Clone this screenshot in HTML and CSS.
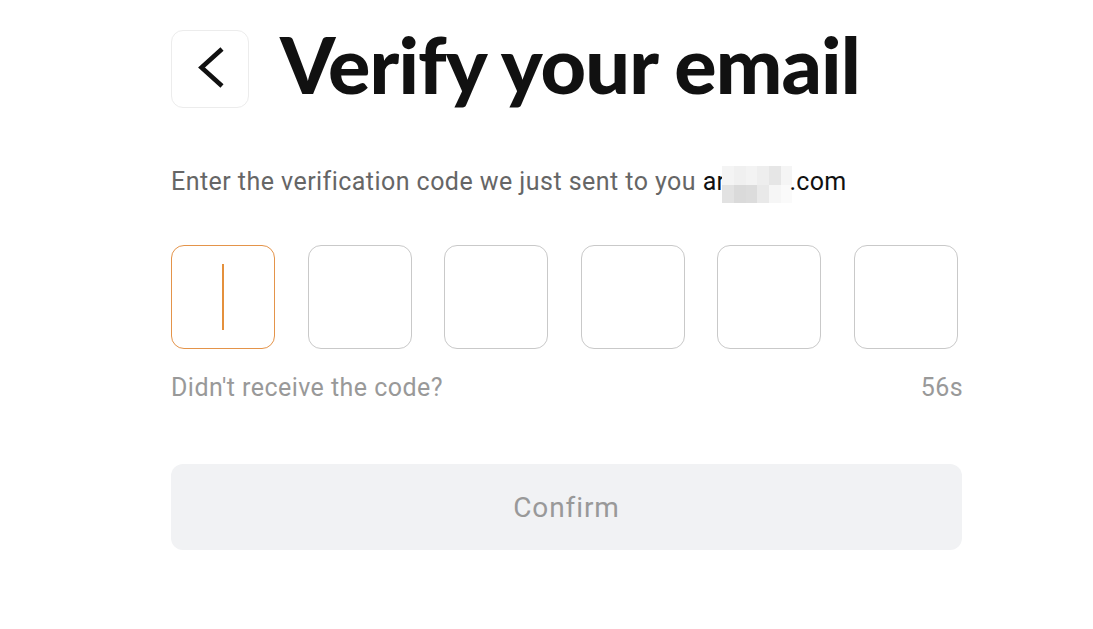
FILE: index.html
```html
<!DOCTYPE html>
<html lang="en">
<head>
<meta charset="utf-8">
<title>Verify your email</title>
<link rel="stylesheet" href="styles.css">
</head>
<body>
<main class="page">
  <header class="head">
    <button class="back" aria-label="Back">
      <svg width="78" height="78" viewBox="0 0 78 78"><path d="M51 19 L30.5 37.5 L51 56" fill="none" stroke="#111" stroke-width="4.6" stroke-linecap="butt" stroke-linejoin="miter"/></svg>
    </button>
    <h1 class="title">Verify your email</h1>
  </header>
  <p class="sub">Enter the verification code we just sent to you <span class="mail">a<span class="ml">r</span><span class="blur"><span class="px"><i class="b1"></i><i class="b2"></i><i class="b3"></i><i class="b4"></i><i class="b5"></i><i class="b6"></i><i class="b7"></i><i class="b8"></i><i class="b9"></i><i class="b10"></i><i class="b11"></i><i class="b12"></i></span></span>.com</span></p>
  <div class="codes">
    <div class="cell active"><span class="caret"></span></div>
    <div class="cell"></div>
    <div class="cell"></div>
    <div class="cell"></div>
    <div class="cell"></div>
    <div class="cell"></div>
  </div>
  <div class="resend">
    <span>Didn't receive the code?</span>
    <span class="timer">56s</span>
  </div>
  <button class="confirm">Confirm</button>
</main>
</body>
</html>
```
FILE: styles.css
```css
html, body {
  margin: 0;
  padding: 0;
  background: #fff;
}
body {
  font-family: "Roboto", "Liberation Sans", sans-serif;
}
.page {
  width: 791px;
  margin-left: 171px;
  padding-top: 30px;
}
.head {
  display: flex;
  align-items: flex-start;
  gap: 31px;
  height: 78px;
}
.back {
  width: 78px;
  height: 78px;
  box-sizing: border-box;
  border: 1px solid #ececec;
  border-radius: 12px;
  background: #fff;
  display: flex;
  align-items: center;
  justify-content: center;
  padding: 0;
  flex: none;
}
.back svg {
  display: block;
  flex: none;
}
.title {
  margin: -5px 0 0;
  font-family: "Lato", "Liberation Sans", sans-serif;
  font-weight: 900;
  font-size: 79px;
  letter-spacing: -0.9px;
  color: #111;
  line-height: 78px;
  white-space: nowrap;
}
.sub {
  margin: 60px 0 0;
  height: 28px;
  font-size: 25px;
  letter-spacing: 0.45px;
  color: #666;
  line-height: 28px;
  white-space: nowrap;
}
.mail {
  color: #111;
  letter-spacing: 0.3px;
}
.blur {
  display: inline-block;
  overflow: hidden;
  width: 70px;
  height: 37px;
  vertical-align: -5px;
  margin: -20px -3px -8px -3px;
}
.px {
  display: grid;
  grid-template-columns: repeat(6, 1fr);
  grid-template-rows: repeat(2, 1fr);
  height: 100%;
}
.px i { display: block; background: #f2f2f2; }
.px .b1 { background: #f4f4f4; }
.px .b2 { background: #f0f0f0; }
.px .b3 { background: #f3f3f3; }
.px .b4 { background: #eeeeee; }
.px .b5 { background: #e6e6e6; }
.px .b6 { background: #f5f5f5; }
.px .b7 { background: #e2e2e2; }
.px .b8 { background: #dadada; }
.px .b9 { background: #dcdcdc; }
.px .b10 { background: #e9e9e9; }
.px .b11 { background: #f6f6f6; }
.px .b12 { background: #fafafa; }
.codes {
  margin-top: 49px;
  display: grid;
  grid-template-columns: repeat(6, 104px);
  column-gap: 32.6px;
}
.cell {
  height: 104px;
  box-sizing: border-box;
  border: 1px solid #c9c9c9;
  border-radius: 13px;
  display: flex;
  align-items: center;
  justify-content: center;
}
.cell.active {
  border-color: #e4944a;
}
.caret {
  width: 2px;
  height: 66px;
  background: #e4903c;
}
.resend {
  margin-top: 25px;
  display: flex;
  justify-content: space-between;
  font-size: 25px;
  letter-spacing: 0.45px;
  color: #999;
  line-height: 28px;
}
.timer {
  margin-right: -1px;
}
.confirm {
  margin-top: 62px;
  width: 791px;
  height: 86px;
  border: none;
  border-radius: 12px;
  background: #f1f2f4;
  color: #999;
  font-family: "Roboto", "Liberation Sans", sans-serif;
  font-size: 28px;
  letter-spacing: 0.9px;
  display: block;
}
```
